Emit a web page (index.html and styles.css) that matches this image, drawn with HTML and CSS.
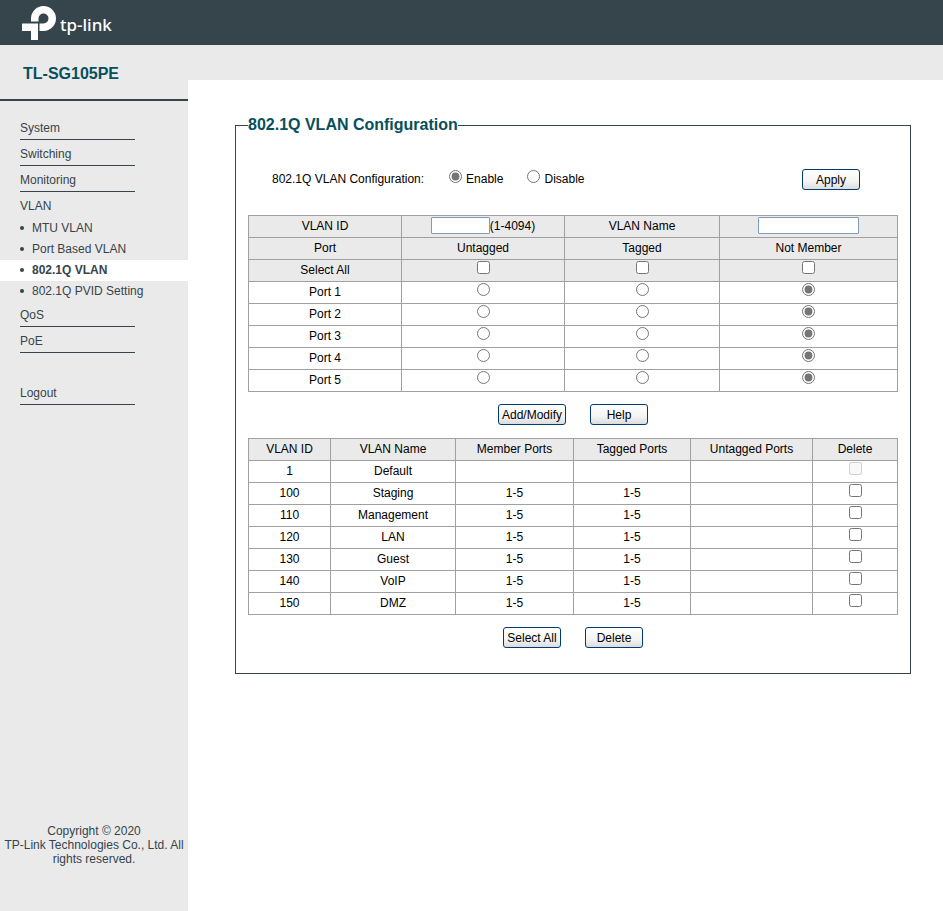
FILE: index.html
```html
<!DOCTYPE html>
<html lang="en">
<head>
<meta charset="utf-8">
<title>TL-SG105PE</title>
<link rel="stylesheet" href="styles.css">
</head>
<body>
<header class="topbar">
  <a class="brand" href="#">
    <svg class="brand-mark" viewBox="0 0 34 34" width="34" height="34" aria-hidden="true">
      <path fill="#fff" d="M9 15.500V12.500A12.500 12.500 0 1 1 21.500 25H17.500V17.500H21.500A5 5 0 1 0 16.500 12.500V15.500Z"/>
      <path fill="#fff" d="M.5 17.500H16V33.500Q16 34 15.500 34H9.500Q9 34 9 33.500V25H.5Q0 25 0 24.500V18Q0 17.500 .5 17.500Z"/>
    </svg>
    <span class="brand-name">tp-link</span>
  </a>
</header>
<div class="layout">
  <aside class="sidebar">
    <h1 class="model">TL-SG105PE</h1>
    <nav class="menu">
      <a class="item" href="#">System</a>
      <a class="item" href="#">Switching</a>
      <a class="item" href="#">Monitoring</a>
      <a class="item open" href="#">VLAN</a>
      <ul class="submenu">
        <li><a href="#">MTU VLAN</a></li>
        <li><a href="#">Port Based VLAN</a></li>
        <li class="current"><a href="#">802.1Q VLAN</a></li>
        <li><a href="#">802.1Q PVID Setting</a></li>
      </ul>
      <a class="item" href="#">QoS</a>
      <a class="item" href="#">PoE</a>
      <a class="item logout" href="#">Logout</a>
    </nav>
    <p class="copyright">Copyright © 2020<br>TP-Link Technologies Co., Ltd. All rights reserved.</p>
  </aside>
  <main class="content">
    <form>
    <fieldset class="panel">
      <legend>802.1Q VLAN Configuration</legend>
      <div class="mode">
        <span class="mode-label">802.1Q VLAN Configuration:</span>
        <label class="choice"><input type="radio" name="mode" checked>Enable</label>
        <label class="choice"><input type="radio" name="mode">Disable</label>
        <button class="apply" type="button">Apply</button>
      </div>

      <table class="grid">
        <colgroup><col class="p1"><col class="p2"><col class="p3"><col></colgroup>
        <thead>
          <tr><th><label for="vid">VLAN ID</label></th><th><span class="field"><input class="vid" id="vid" type="text">(1-4094)</span></th><th><label for="vname">VLAN Name</label></th><th><span class="field"><input class="vname" id="vname" type="text"></span></th></tr>
          <tr><th>Port</th><th>Untagged</th><th>Tagged</th><th>Not Member</th></tr>
          <tr><th>Select All</th><th><input type="checkbox" aria-label="All untagged"></th><th><input type="checkbox" aria-label="All tagged"></th><th><input type="checkbox" aria-label="All not member"></th></tr>
        </thead>
        <tbody>
          <tr><td>Port 1</td><td><input type="radio" name="port1" aria-label="Untagged"></td><td><input type="radio" name="port1" aria-label="Tagged"></td><td><input type="radio" name="port1" aria-label="Not Member" checked></td></tr>
          <tr><td>Port 2</td><td><input type="radio" name="port2" aria-label="Untagged"></td><td><input type="radio" name="port2" aria-label="Tagged"></td><td><input type="radio" name="port2" aria-label="Not Member" checked></td></tr>
          <tr><td>Port 3</td><td><input type="radio" name="port3" aria-label="Untagged"></td><td><input type="radio" name="port3" aria-label="Tagged"></td><td><input type="radio" name="port3" aria-label="Not Member" checked></td></tr>
          <tr><td>Port 4</td><td><input type="radio" name="port4" aria-label="Untagged"></td><td><input type="radio" name="port4" aria-label="Tagged"></td><td><input type="radio" name="port4" aria-label="Not Member" checked></td></tr>
          <tr><td>Port 5</td><td><input type="radio" name="port5" aria-label="Untagged"></td><td><input type="radio" name="port5" aria-label="Tagged"></td><td><input type="radio" name="port5" aria-label="Not Member" checked></td></tr>
        </tbody>
      </table>
      <div class="actions">
        <button type="button">Add/Modify</button>
        <button type="button">Help</button>
      </div>

      <table class="grid">
        <colgroup><col class="v1"><col class="v2"><col class="v3"><col class="v4"><col class="v5"><col></colgroup>
        <thead>
          <tr><th>VLAN ID</th><th>VLAN Name</th><th>Member Ports</th><th>Tagged Ports</th><th>Untagged Ports</th><th>Delete</th></tr>
        </thead>
        <tbody>
          <tr><td>1</td><td>Default</td><td></td><td></td><td></td><td><input type="checkbox" aria-label="Delete VLAN 1" disabled></td></tr>
          <tr><td>100</td><td>Staging</td><td>1-5</td><td>1-5</td><td></td><td><input type="checkbox" aria-label="Delete VLAN 100"></td></tr>
          <tr><td>110</td><td>Management</td><td>1-5</td><td>1-5</td><td></td><td><input type="checkbox" aria-label="Delete VLAN 110"></td></tr>
          <tr><td>120</td><td>LAN</td><td>1-5</td><td>1-5</td><td></td><td><input type="checkbox" aria-label="Delete VLAN 120"></td></tr>
          <tr><td>130</td><td>Guest</td><td>1-5</td><td>1-5</td><td></td><td><input type="checkbox" aria-label="Delete VLAN 130"></td></tr>
          <tr><td>140</td><td>VoIP</td><td>1-5</td><td>1-5</td><td></td><td><input type="checkbox" aria-label="Delete VLAN 140"></td></tr>
          <tr><td>150</td><td>DMZ</td><td>1-5</td><td>1-5</td><td></td><td><input type="checkbox" aria-label="Delete VLAN 150"></td></tr>
        </tbody>
      </table>
      <div class="actions">
        <button type="button">Select All</button>
        <button type="button">Delete</button>
      </div>
    </fieldset>
    </form>
  </main>
</div>
</body>
</html>
```
FILE: styles.css
```css
* { box-sizing: border-box; }

body {
  display: flex;
  flex-direction: column;
  min-height: 100vh;
  margin: 0;
  background: #fff;
  color: #000;
  font: 12px/14px "Liberation Sans", Arial, sans-serif;
}

a { color: inherit; text-decoration: none; }

.topbar {
  display: flex;
  height: 45px;
  padding: 6px 22px;
  background: #36444b;
}

.brand { display: flex; gap: 4px; color: #fff; }
.brand-mark { flex: none; }
.brand-name { padding-top: 8px; font: 500 17px/22px "Noto Sans", sans-serif; }

.layout { display: flex; flex: 1; }

.sidebar {
  display: flex;
  flex: none;
  flex-direction: column;
  width: 188px;
  background: #eaeaea;
  color: #36444b;
}

.model {
  margin: 0;
  padding: 20px 23px 16px;
  border-bottom: 2px solid #36444b;
  color: #06505d;
  font-size: 16px;
  line-height: 18px;
}

.menu { padding-top: 13px; }

.item {
  display: block;
  width: 115px;
  height: 26px;
  margin-left: 20px;
  padding-top: 7px;
  border-bottom: 1px solid #36444b;
}
.item.open { border-bottom: 0; }
.item.logout { margin-top: 26px; }

.submenu { margin: 0 0 -1px; padding: 0; list-style: none; }
.submenu a {
  display: flex;
  align-items: center;
  height: 21px;
  padding: 0 0 2px 20px;
}
.submenu a::before {
  width: 4px;
  height: 4px;
  margin-right: 8px;
  border-radius: 2px;
  background: #36444b;
  content: "";
}
.submenu .current { background: #fff; font-weight: bold; }

.copyright { margin: auto 0 45px; text-align: center; }

.content {
  flex: 1;
  padding: 36px 32px 36px 47px;
  border-top: 35px solid #eaeaea;
}

.panel {
  margin: 0;
  padding: 0 12px 12px;
  border: 1px solid #36444b;
}
.panel legend {
  padding: 0;
  color: #06505d;
  font-size: 16px;
  font-weight: bold;
  line-height: 18px;
}

.mode {
  display: flex;
  align-items: center;
  margin: 35px 38px 25px 24px;
}
.mode-label { margin-right: 25px; padding-bottom: 2px; }
.choice { display: flex; margin-right: 24px; padding-bottom: 2px; }
.apply { margin-left: auto; }

input[type="radio"],
input[type="checkbox"] {
  width: 13px;
  height: 13px;
  margin: 0;
  accent-color: #757575;
}
.choice input { margin: -2px 4px 0 0; }

button {
  min-width: 58px;
  height: 21px;
  padding: 0 3px;
  border: 1px solid #003c74;
  border-radius: 3px;
  background: linear-gradient(#fff, #f4f4f2 60%, #dcdce0);
  color: #000;
  font: inherit;
}

.grid {
  width: 100%;
  border-collapse: collapse;
  table-layout: fixed;
}
.grid th,
.grid td {
  height: 22px;
  padding: 0 0 2px;
  border: 1px solid #a0a0a0;
  font-weight: normal;
  text-align: center;
}
.grid th { background: #eaeaea; }
.grid td > input,
.grid th > input { display: block; margin: 0 auto 4px; }

.field { display: flex; align-items: center; justify-content: center; }
.field input {
  height: 17px;
  padding: 0 2px;
  border: 1px solid #7f9db9;
  border-radius: 1px;
  background: #fff;
  font: inherit;
}
.vid { width: 59px; }
.vname { width: 101px; }

.p1 { width: 153px; }
.p2 { width: 163px; }
.p3 { width: 155px; }
.v1 { width: 82px; }
.v2 { width: 125px; }
.v3 { width: 118px; }
.v4 { width: 117px; }
.v5 { width: 122px; }

.actions {
  display: flex;
  gap: 24px;
  justify-content: center;
  padding: 12px 0 13px;
}
```
